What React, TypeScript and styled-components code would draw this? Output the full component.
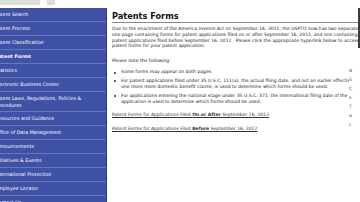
import styled, { createGlobalStyle } from 'styled-components'

const GlobalStyle = createGlobalStyle`
  html, body {
    margin: 0;
    padding: 0;
    background: #ffffff;
  }
  #root {
    width: 360px;
    height: 202px;
    overflow: hidden;
  }
`

const Page = styled.div`
  width: 360px;
  height: 202px;
  overflow: hidden;
  display: flex;
  flex-direction: column;
  font-family: 'DejaVu Sans', Verdana, sans-serif;
  background: #fff;
`

const TopStrip = styled.div`
  height: 8px;
  flex: 0 0 8px;
  display: flex;
  gap: 7px;
  align-items: flex-start;
`

const Tab = styled.div<{ $w: number }>`
  width: ${(p) => p.$w}px;
  height: 5px;
  background: #dcdcdc;
`

const Main = styled.div`
  flex: 1;
  display: flex;
  min-height: 0;
`

const Sidebar = styled.nav`
  flex: 0 0 112px;
  margin-left: -6px;
  background: #4052a6;
  border-right: 1px solid #2c3b80;
  display: flex;
  flex-direction: column;
`

const NavItem = styled.div<{ $active?: boolean; $tall?: boolean }>`
  height: ${(p) => (p.$tall ? 20 : 14)}px;
  flex: 0 0 auto;
  box-sizing: border-box;
  border-bottom: 1px solid #6777bd;
  display: flex;
  flex-direction: column;
  justify-content: center;
  padding: 2px 0 0 1px;
  color: #ffffff;
  font-size: 4.8px;
  line-height: 6.6px;
  font-weight: ${(p) => (p.$active ? 'bold' : 'normal')};
  white-space: nowrap;
`

const Content = styled.main`
  flex: 1;
  min-width: 0;
  padding-left: 5px;
  overflow: hidden;
  position: relative;
  color: #222;
`

const Title = styled.h1`
  margin: 0;
  padding-top: 4px;
  height: 10px;
  font-size: 8.2px;
  line-height: 9px;
  font-weight: bold;
  color: #111;
  border-bottom: 1px solid #8a8a8a;
`

const Para = styled.div`
  margin-top: 3px;
  font-size: 4.55px;
  line-height: 5.8px;
  white-space: nowrap;
`

const Line = styled.div`
  white-space: nowrap;
`

const Note = styled.div`
  margin-top: 9px;
  font-size: 4.55px;
  line-height: 5.8px;
`

const Lower = styled.div`
  display: flex;
`

const Notes = styled.div`
  flex: 1;
  min-width: 0;
  overflow: hidden;
  font-size: 4.55px;
  line-height: 6.5px;
`

const Bullets = styled.ul`
  list-style: none;
  margin: 5.5px 0 0 0;
  padding: 0;
`

const Bullet = styled.li`
  position: relative;
  padding-left: 9px;
  margin-bottom: 2px;
  white-space: nowrap;

  &::before {
    content: '';
    position: absolute;
    left: 2px;
    top: 2.1px;
    width: 2.4px;
    height: 2.4px;
    border-radius: 50%;
    background: #333;
  }
`

const FormLink = styled.a`
  display: block;
  margin-top: 5.75px;
  color: #333;
  text-decoration: underline;
  white-space: nowrap;
  & + & {
    margin-top: 8px;
  }
`

const Rail = styled.div`
  flex: 0 0 11px;
  font-size: 4.5px;
  line-height: 9px;
  color: #444;
  padding-top: 2px;
`

const DarkBar = styled.div`
  position: absolute;
  right: 0;
  top: -8px;
  width: 2px;
  height: 48px;
  background: #3a3a3a;
`

const navItems = [
  { label: 'Patent Search' },
  { label: 'Patent Process' },
  { label: 'Patent Classification' },
  { label: 'Patent Forms', active: true },
  { label: 'Statistics' },
  { label: 'Electronic Business Center' },
  { label: ['Patent Laws, Regulations, Policies &', 'Procedures'], tall: true },
  { label: 'Resources and Guidance' },
  { label: 'Office of Data Management' },
  { label: 'Announcements' },
  { label: 'Initiatives & Events' },
  { label: 'International Protection' },
  { label: 'Employee Locator' },
  { label: 'Contact Us' },
]

export default function App() {
  return (
    <>
      <GlobalStyle />
      <Page>
        <TopStrip>
          <Tab $w={40} />
          <Tab $w={8} />
        </TopStrip>
        <Main>
          <Sidebar>
            {navItems.map((item, i) => (
              <NavItem key={i} $active={item.active} $tall={item.tall}>
                {Array.isArray(item.label)
                  ? item.label.map((l) => <Line key={l}>{l}</Line>)
                  : item.label}
              </NavItem>
            ))}
          </Sidebar>
          <Content>
            <DarkBar />
            <Title>Patents Forms</Title>
            <Para>
              <Line>
                Due to the enactment of the America Invents Act on September 16, 2011, the USPTO now has two separate
              </Line>
              <Line>
                one page containing forms for patent applications filed on or after September 16, 2012, and one containing forms for
              </Line>
              <Line>
                patent applications filed before September 16, 2012.&nbsp; Please click the appropriate hyperlink below to access the
              </Line>
              <Line>patent forms for your patent application.</Line>
            </Para>
            <Note>Please note the following:</Note>
            <Lower>
              <Notes>
                <Bullets>
                  <Bullet>Some forms may appear on both pages.</Bullet>
                  <Bullet>
                    <Line>
                      For patent applications filed under 35 U.S.C. 111(a), the actual filing date, and not an earlier effective filing date
                    </Line>
                    <Line>
                      one more more domestic benefit claims, is used to determine which forms should be used.
                    </Line>
                  </Bullet>
                  <Bullet>
                    <Line>
                      For applications entering the national stage under 35 U.S.C. 371, the international filing date of the international
                    </Line>
                    <Line>application is used to determine which forms should be used.</Line>
                  </Bullet>
                </Bullets>
                <FormLink>
                  Patent Forms for Applications Filed <b>On or After</b> September 16, 2012
                </FormLink>
                <FormLink>
                  Patent Forms for Applications Filed <b>Before</b> September 16, 2012
                </FormLink>
              </Notes>
              <Rail>
                <Line>A</Line>
                <Line>S</Line>
                <Line>C</Line>
                <Line>s</Line>
                <Line>T</Line>
                <Line>a</Line>
                <Line>L</Line>
              </Rail>
            </Lower>
          </Content>
        </Main>
      </Page>
    </>
  )
}
